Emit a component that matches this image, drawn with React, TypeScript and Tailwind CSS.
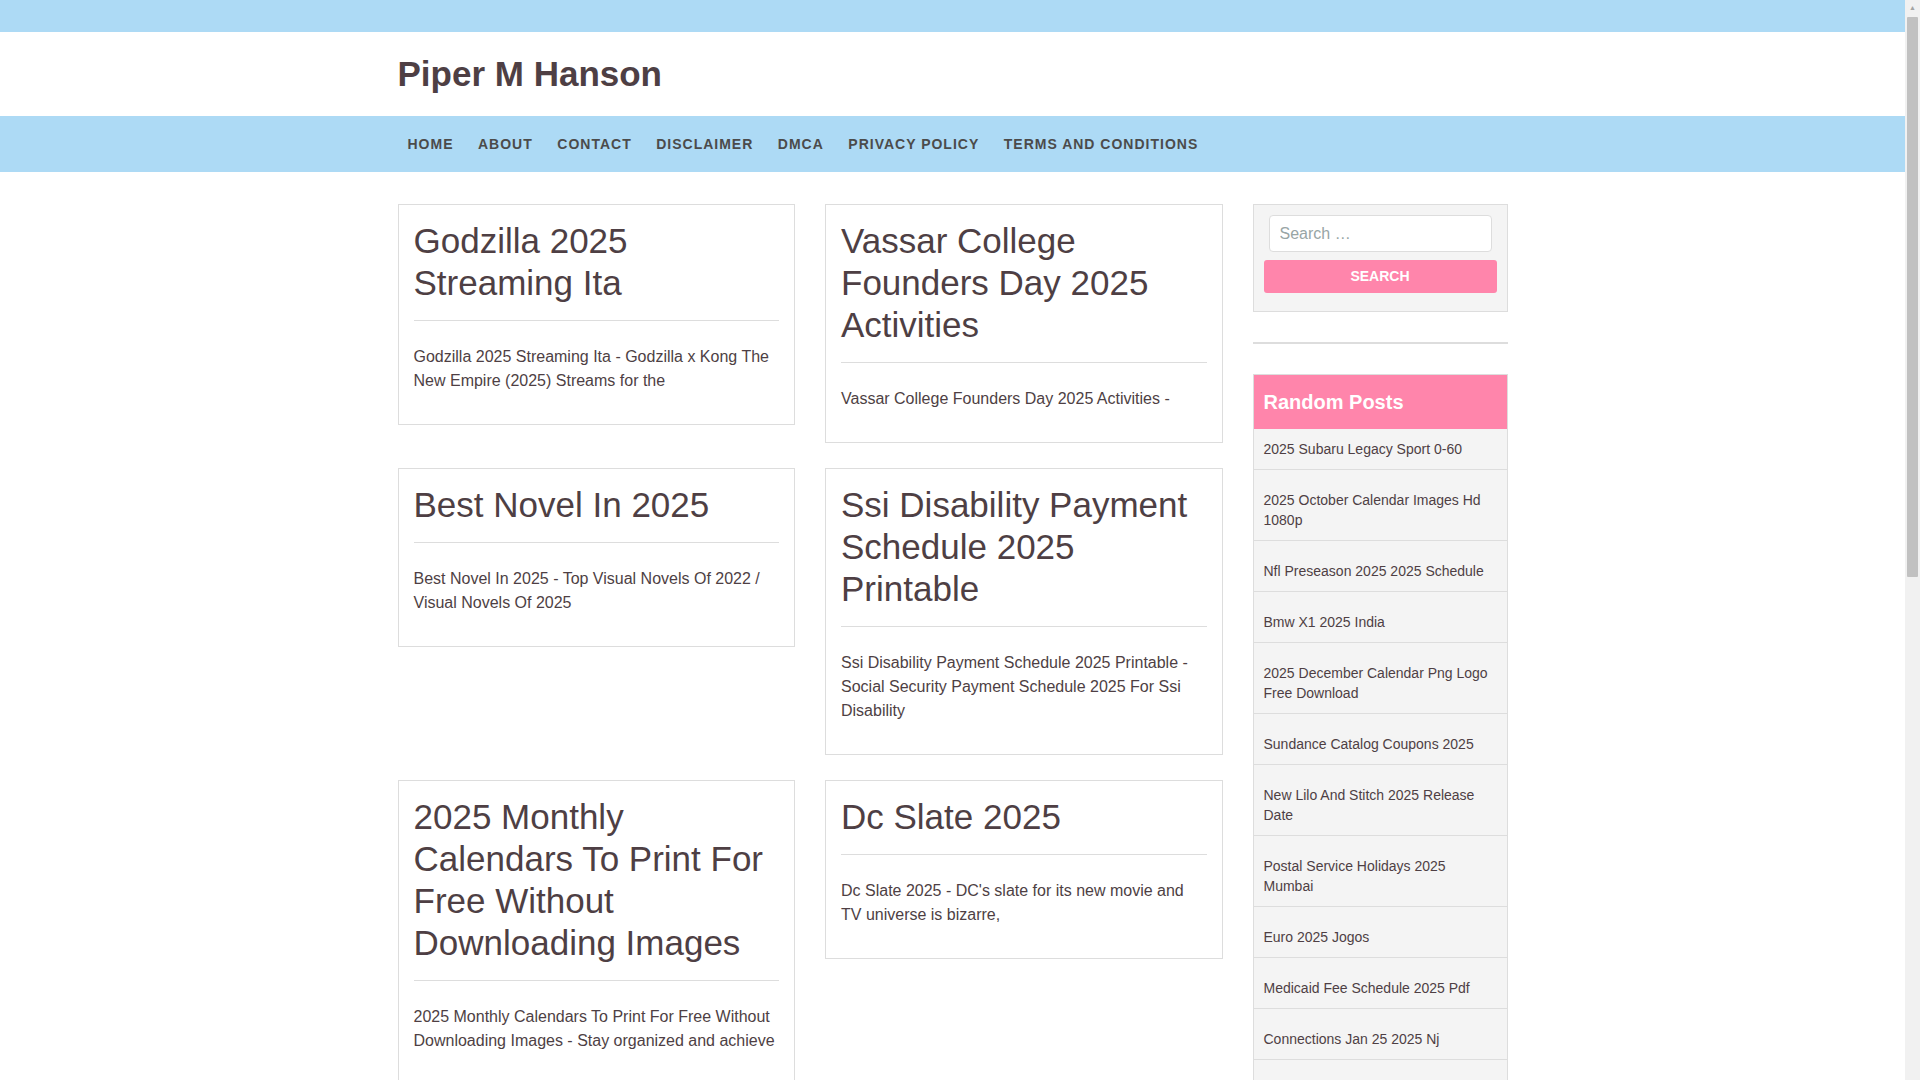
const navItems = ['Home', 'About', 'Contact', 'Disclaimer', 'DMCA', 'Privacy Policy', 'Terms and Conditions'];

const posts = [
  {
    title: 'Godzilla 2025 Streaming Ita',
    excerpt: 'Godzilla 2025 Streaming Ita - Godzilla x Kong The New Empire (2025) Streams for the',
  },
  {
    title: 'Vassar College Founders Day 2025 Activities',
    excerpt: 'Vassar College Founders Day 2025 Activities -',
  },
  {
    title: 'Best Novel In 2025',
    excerpt: 'Best Novel In 2025 - Top Visual Novels Of 2022 / Visual Novels Of 2025',
  },
  {
    title: 'Ssi Disability Payment Schedule 2025 Printable',
    excerpt: 'Ssi Disability Payment Schedule 2025 Printable - Social Security Payment Schedule 2025 For Ssi Disability',
  },
  {
    title: '2025 Monthly Calendars To Print For Free Without Downloading Images',
    excerpt: '2025 Monthly Calendars To Print For Free Without Downloading Images - Stay organized and achieve',
  },
  {
    title: 'Dc Slate 2025',
    excerpt: "Dc Slate 2025 - DC's slate for its new movie and TV universe is bizarre,",
  },
];

const randomPosts = [
  '2025 Subaru Legacy Sport 0-60',
  '2025 October Calendar Images Hd 1080p',
  'Nfl Preseason 2025 2025 Schedule',
  'Bmw X1 2025 India',
  '2025 December Calendar Png Logo Free Download',
  'Sundance Catalog Coupons 2025',
  'New Lilo And Stitch 2025 Release Date',
  'Postal Service Holidays 2025 Mumbai',
  'Euro 2025 Jogos',
  'Medicaid Fee Schedule 2025 Pdf',
  'Connections Jan 25 2025 Nj',
  'Best Family Cars 2025 Uk',
  'Easter Sunday 2025 Date',
];

function PostCard({ title, excerpt }: { title: string; excerpt: string }) {
  return (
    <article className="border border-[#dddddd] bg-white px-[15px] pt-[15px] pb-[15px]">
      <header className="border-b border-[#dddddd] pb-[16px]">
        <h2 className="text-[35px] leading-[42px] font-normal text-[#4e3f44]">
          <a href="#">{title}</a>
        </h2>
      </header>
      <p className="mt-[24px] mb-[16px] text-[16px] leading-[24px] text-[#4e3f44]">{excerpt}</p>
    </article>
  );
}

function Sidebar() {
  return (
    <aside className="w-[255px] shrink-0">
      <div className="border border-[#dddddd] bg-[#f4f4f4] px-[10px] pt-[10px] pb-[18px]">
        <div className="mx-[5px]">
          <input
            type="search"
            placeholder="Search …"
            className="block h-[37px] w-full rounded-[4px] border border-[#dddddd] bg-white px-[10px] text-[16px] text-[#4e3f44] outline-none placeholder:text-[#98a5a5]"
          />
        </div>
        <button className="mt-[8px] block h-[33px] w-full rounded-[3px] bg-[#ff85ab] text-[14px] font-bold uppercase text-white">
          Search
        </button>
      </div>

      <hr className="my-[30px] h-[2px] border-0 bg-[#dddddd]" />

      <div className="border border-[#dddddd]">
        <h3 className="bg-[#ff85ab] px-[10px] py-[15px] text-[20px] leading-[24px] font-bold text-white">
          Random Posts
        </h3>
        <ul className="bg-[#f4f4f4]">
          {randomPosts.map((p, i) => (
            <li
              key={p}
              className={`border-b border-[#dddddd] px-[10px] pb-[10px] text-[14px] leading-[20px] text-[#4e3f44] ${
                i === 0 ? 'pt-[10px]' : 'pt-[20px]'
              }`}
            >
              <a href="#">{p}</a>
            </li>
          ))}
        </ul>
      </div>
    </aside>
  );
}

export default function App() {
  return (
    <div className="bg-white pr-[15px] font-['Liberation_Sans',Arial,sans-serif] text-[#4e3f44]">
      {/* window scrollbar strip, as in the screenshot */}
      <div className="fixed top-0 right-0 flex h-screen w-[15px] flex-col bg-[#f1f1f1]">
        <div className="flex h-[17px] items-center justify-center text-[7px] text-[#a3a3a3]">▲</div>
        <div className="mx-[2px] h-[560px] rounded-[1px] bg-[#c1c1c1]" />
      </div>

      <div className="h-[32px] bg-[#addaf5]" />

      <div className="mx-auto w-[1140px] px-[15px]">
        <div className="flex h-[84px] items-center">
          <h1 className="text-[35px] leading-[42px] font-bold text-[#4e3f44]">
            <a href="#">Piper M Hanson</a>
          </h1>
        </div>
      </div>

      <nav className="bg-[#addaf5]">
        <div className="mx-auto w-[1140px] px-[15px]">
          <ul className="flex h-[56px] items-center gap-[24.5px] pl-[10px]">
            {navItems.map((item) => (
              <li key={item}>
                <a href="#" className="text-[14px] font-bold uppercase tracking-[1px] text-[#4b4b4b]">
                  {item}
                </a>
              </li>
            ))}
          </ul>
        </div>
      </nav>

      <div className="mx-auto w-[1140px] px-[15px] pt-[32px] pb-[40px]">
        <div className="flex items-start gap-[30px]">
          <main className="grid w-[825px] shrink-0 grid-cols-2 items-start gap-x-[30px] gap-y-[25px]">
            {posts.map((p) => (
              <PostCard key={p.title} title={p.title} excerpt={p.excerpt} />
            ))}
          </main>
          <Sidebar />
        </div>
      </div>
    </div>
  );
}
